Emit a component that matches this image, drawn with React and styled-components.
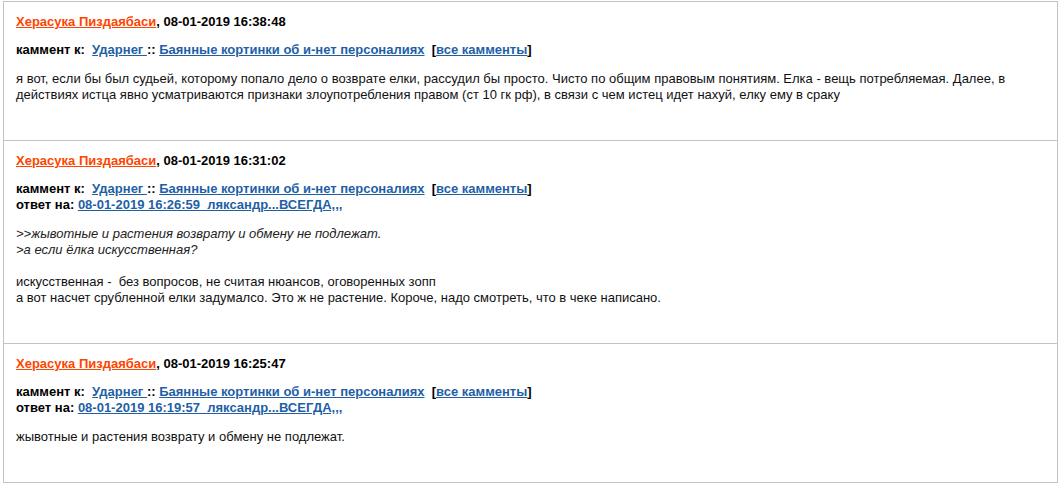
import React from "react";
import styled, { createGlobalStyle } from "styled-components";

const GlobalStyle = createGlobalStyle`
  body {
    margin: 0;
    background: #fff;
    font-family: "Liberation Sans", Arial, sans-serif;
    font-size: 13px;
    color: #000;
  }
`;

const comments = [
  {
    time: "08-01-2019 16:38:48",
    body: [
      "я вот, если бы был судьей, которому попало дело о возврате елки, рассудил бы просто. Чисто по общим правовым понятиям. Елка - вещь потребляемая. Далее, в действиях истца явно усматриваются признаки злоупотребления правом (ст 10 гк рф), в связи с чем истец идет нахуй, елку ему в сраку",
    ],
  },
  {
    time: "08-01-2019 16:31:02",
    reply: "08-01-2019 16:26:59  ляксандр...ВСЕГДА,,,",
    quote: [">>жывотные и растения возврату и обмену не подлежат.", ">а если ёлка искусственная?"],
    body: [
      "искусственная -  без вопросов, не считая нюансов, оговоренных зопп",
      "а вот насчет срубленной елки задумалсо. Это ж не растение. Короче, надо смотреть, что в чеке написано.",
    ],
  },
  {
    time: "08-01-2019 16:25:47",
    reply: "08-01-2019 16:19:57  ляксандр...ВСЕГДА,,,",
    body: ["жывотные и растения возврату и обмену не подлежат."],
  },
];

function Comment({ c }) {
  return (
    <Row>
      <Header>
        <Author href="#">Херасука Пиздаябаси</Author>, {c.time}
      </Header>
      <Meta>
        <div>
          каммент к:&nbsp; <Link href="#">Ударнег </Link>::{" "}
          <Link href="#">Баянные кортинки об и-нет персоналиях</Link>&nbsp; [
          <Link href="#">все камменты</Link>]
        </div>
        {c.reply && (
          <div>
            ответ на: <Link href="#">{c.reply}</Link>
          </div>
        )}
      </Meta>
      <Body>
        {c.quote && (
          <>
            {c.quote.map((q, i) => (
              <Quote key={i}>{q}</Quote>
            ))}
            <br />
          </>
        )}
        {c.body.map((b, i) => (
          <div key={i}>{b}</div>
        ))}
      </Body>
    </Row>
  );
}

export default function App() {
  return (
    <>
      <GlobalStyle />
      <List>
        {comments.map((c, i) => (
          <Comment key={i} c={c} />
        ))}
      </List>
    </>
  );
}

const List = styled.div`
  margin: 1px 2px 0 3px;
  border: 1px solid #c3c3c3;
  border-bottom: none;
`;

const Row = styled.div`
  border-bottom: 1px solid #c3c3c3;
  padding: 12px 14px 37px 12px;
  line-height: 16px;
`;

const Header = styled.div`
  font-weight: bold;
`;

const Author = styled.a`
  color: #ff4500;
  text-decoration: underline;
`;

const Meta = styled.div`
  margin-top: 12px;
  font-weight: bold;
`;

const Link = styled.a`
  color: #1f5fa6;
  text-decoration: underline;
  white-space: pre;
`;

const Body = styled.div`
  margin-top: 13px;
  color: #111;
  white-space: pre-wrap;
`;

const Quote = styled.div`
  font-style: italic;
  color: #222;
`;
